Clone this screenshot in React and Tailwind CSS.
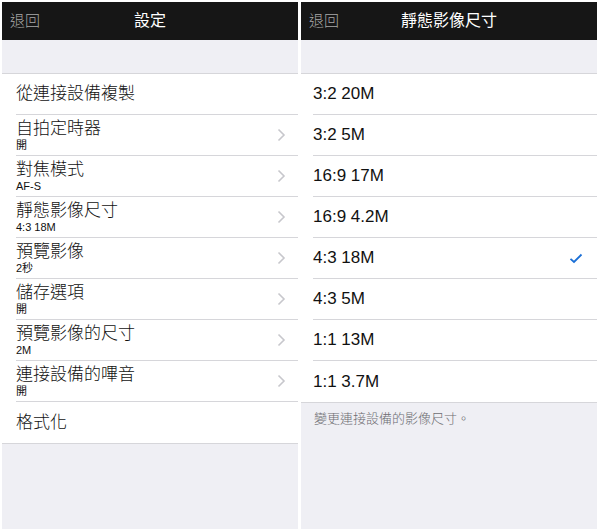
import React from "react";

const font = { fontFamily: '"Liberation Sans", "Noto Sans CJK TC", sans-serif' };

function Chevron() {
  return (
    <svg width="9" height="14" viewBox="0 0 9 14" className="shrink-0">
      <path d="M1.5 1.5 L7 7 L1.5 12.5" fill="none" stroke="#c7c7cc" strokeWidth="1.6" />
    </svg>
  );
}

function Check() {
  return (
    <svg width="14" height="11" viewBox="0 0 14 11" className="shrink-0">
      <path d="M1.5 5.8 L5 9 L12.5 1.5" fill="none" stroke="#1a6fd6" strokeWidth="1.8" />
    </svg>
  );
}

function Nav({ title }) {
  return (
    <div className="relative h-[38px] bg-[#161616] flex items-center justify-center">
      <span className="absolute left-[8px] text-[15px] font-light text-[#a8a8a8]">退回</span>
      <span className="text-[16px] text-white font-normal">{title}</span>
    </div>
  );
}

const leftRows = [
  { t: "從連接設備複製" },
  { t: "自拍定時器", s: "開", c: true },
  { t: "對焦模式", s: "AF-S", c: true },
  { t: "靜態影像尺寸", s: "4:3 18M", c: true },
  { t: "預覽影像", s: "2秒", c: true },
  { t: "儲存選項", s: "開", c: true },
  { t: "預覽影像的尺寸", s: "2M", c: true },
  { t: "連接設備的嗶音", s: "開", c: true },
  { t: "格式化" },
];

const rightRows = ["3:2 20M", "3:2 5M", "16:9 17M", "16:9 4.2M", "4:3 18M", "4:3 5M", "1:1 13M", "1:1 3.7M"];

export default function App() {
  return (
    <div className="w-[600px] h-[531px] bg-white flex gap-[3px] p-[2px] pr-[3px]" style={font}>
      <div className="w-[296px] h-[527px] bg-[#efeff4] flex flex-col">
        <Nav title="設定" />
        <div className="h-[33px]" />
        <div className="bg-white border-t border-b border-[#d6d6da]">
          {leftRows.map((r, i) => (
            <div key={i} className="pl-[14px]">
              <div
                className={
                  "h-[41px] flex items-center pr-[12px] " +
                  (i < leftRows.length - 1 ? "border-b border-[#d6d6da]" : "")
                }
              >
                <div className="flex-1 flex flex-col justify-center">
                  <span className="text-[17px] leading-[20px] font-light text-[#111]">{r.t}</span>
                  {r.s && <span className="text-[11px] leading-[12px] text-[#111]">{r.s}</span>}
                </div>
                {r.c && <Chevron />}
              </div>
            </div>
          ))}
        </div>
      </div>
      <div className="w-[296px] h-[527px] bg-[#efeff4] flex flex-col">
        <Nav title="靜態影像尺寸" />
        <div className="h-[33px]" />
        <div className="bg-white border-t border-b border-[#d6d6da]">
          {rightRows.map((r, i) => (
            <div key={i} className="pl-[12px]">
              <div
                className={
                  "h-[41px] flex items-center pr-[14px] " +
                  (i < rightRows.length - 1 ? "border-b border-[#d6d6da]" : "")
                }
              >
                <span className="flex-1 text-[17px] text-[#111]">{r}</span>
                {r === "4:3 18M" && <Check />}
              </div>
            </div>
          ))}
        </div>
        <div className="pl-[13px] pt-[6px] text-[13px] font-light text-[#6d6d72]">變更連接設備的影像尺寸。</div>
      </div>
    </div>
  );
}
